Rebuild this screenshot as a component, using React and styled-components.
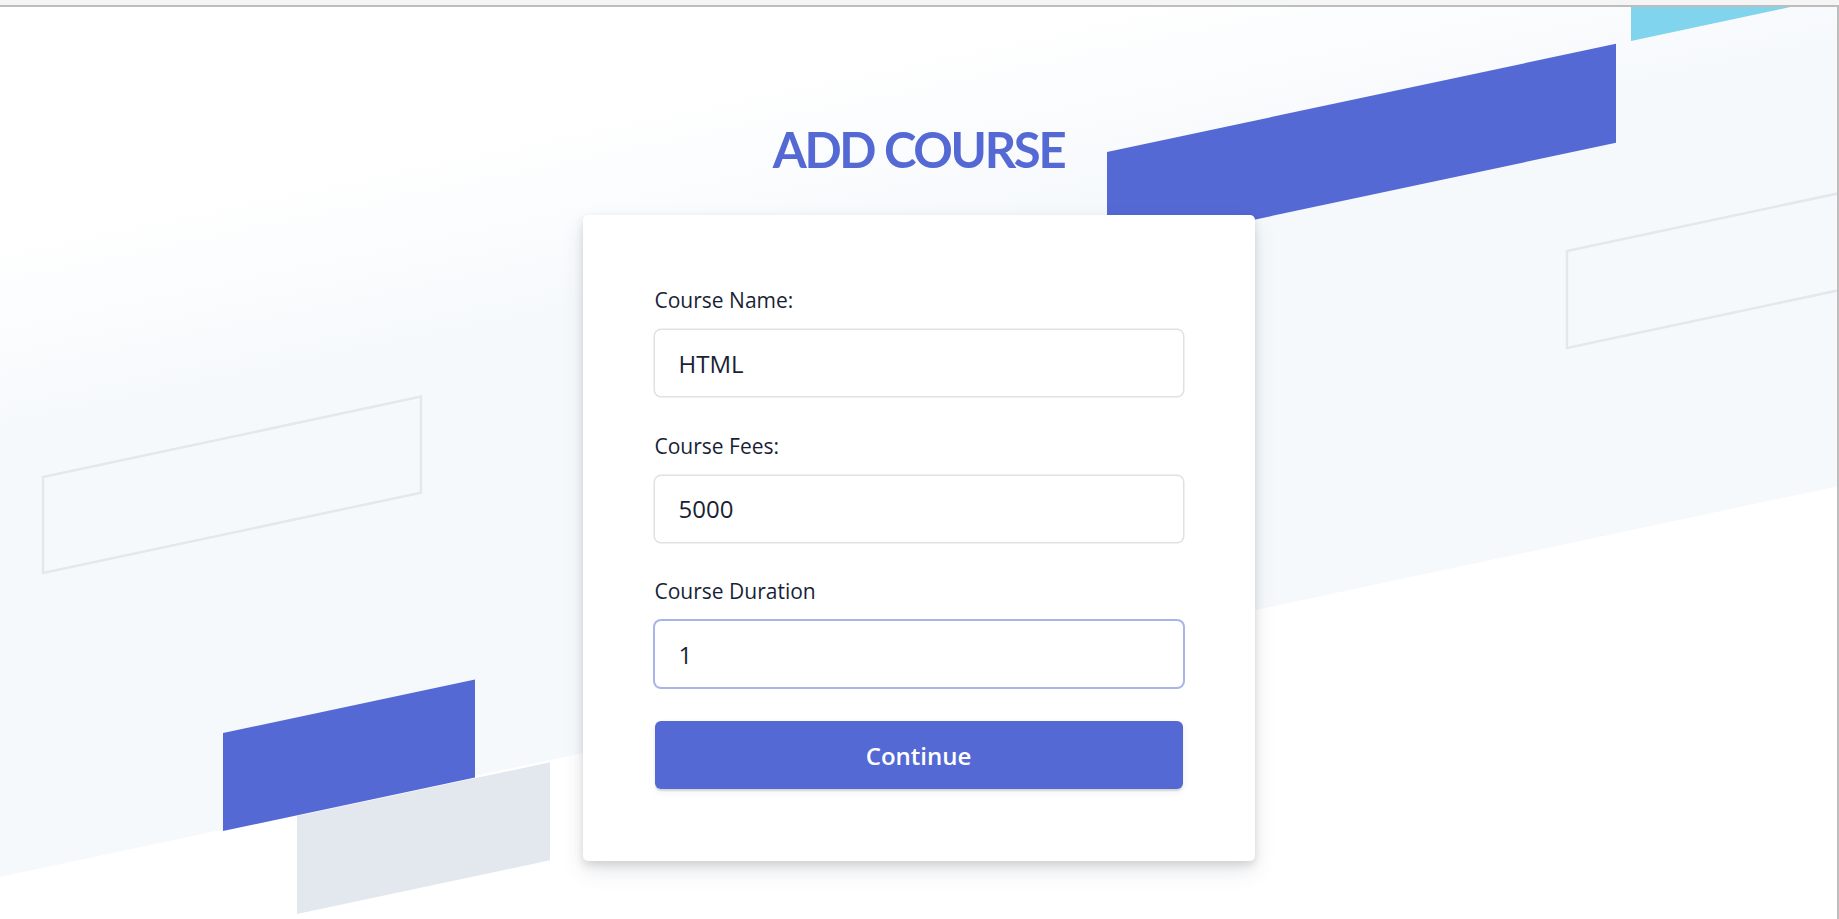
import React from 'react';
import styled, { createGlobalStyle, css } from 'styled-components';

const GlobalStyle = createGlobalStyle`
  * { box-sizing: border-box; }
  html, body { margin: 0; padding: 0; background: #f5f5f5; }
  body {
    font-family: 'Open Sans', 'Noto Sans', sans-serif;
    color: #1a1f36;
  }
`;

const Window = styled('div')`
  display: flex;
  flex-direction: column;
  height: 100vh;
  border-top: 5px solid #f5f5f5;
`;

const Page = styled('main')`
  position: relative;
  flex: 1;
  display: flex;
  flex-direction: column;
  align-items: center;
  overflow: hidden;
  background: #fff;
  border-top: 2px solid #bdbdbd;
  border-right: 2px solid #bdbdbd;
`;

const Backdrop = styled('svg')`
  position: absolute;
  inset: 0;
  width: 100%;
  height: 100%;
  z-index: 0;
`;

const Title = styled('h1')`
  position: relative;
  z-index: 1;
  margin: 112px 0 36px;
  font-family: Lato, 'Open Sans', sans-serif;
  font-size: 49px;
  line-height: 60px;
  font-weight: 700;
  letter-spacing: -2.3px;
  color: #5469d4;
`;

const Card = styled('section')`
  position: relative;
  z-index: 1;
  width: 672px;
  padding: 71px 72px 72px;
  background: #fff;
  border-radius: 5px;
  box-shadow: rgba(60, 66, 87, 0.12) 0 10px 21px 0, rgba(0, 0, 0, 0.12) 0 4px 9px 0;
`;

const Form = styled('form')`
  display: flex;
  flex-direction: column;
`;

const Field = styled('div')`
  display: flex;
  flex-direction: column;
  padding-bottom: 35.5px;

  &:last-of-type {
    padding-bottom: 34px;
  }
`;

const Label = styled('label')`
  font-size: 21px;
  line-height: 29px;
  margin-bottom: 15px;
  color: #1a1f36;
`;

const focusRing = css`
  box-shadow: 0 0 0 2px rgba(84, 105, 212, 0.5);
`;

const Input = styled('input')`
  height: 66px;
  padding: 0 24px;
  border: none;
  border-radius: 6px;
  background: #fff;
  font-family: inherit;
  font-size: 24px;
  color: #1a1f36;
  caret-color: #1a1f36;
  box-shadow: 0 0 0 1.5px rgba(60, 66, 87, 0.16);
  outline: none;
  ${(p) => p.$focused && focusRing}
  &:focus { ${focusRing} }
`;

const SubmitButton = styled('button')`
  height: 68px;
  border: none;
  border-radius: 6px;
  background: #5469d4;
  color: #fff;
  font-family: inherit;
  font-size: 24px;
  font-weight: 600;
  cursor: pointer;
  box-shadow: rgba(0, 0, 0, 0.12) 0 1.5px 1.5px 0, rgba(60, 66, 87, 0.08) 0 3px 7.5px 0;
`;

// slope of the skewed shapes: tan(12deg)
const K = 0.2126;
const slant = (x0, y0, w, h) => {
  const y1 = y0 - K * w;
  return `${x0},${y0} ${x0 + w},${y1} ${x0 + w},${y1 + h} ${x0},${y0 + h}`;
};

const Background = () => (
  <Backdrop viewBox="0 7 1837 912" preserveAspectRatio="xMinYMin slice">
    <defs>
      <linearGradient id="fade" gradientUnits="userSpaceOnUse" x1="48" y1="225" x2="87" y2="411">
        <stop offset="0" stopColor="#ffffff" />
        <stop offset="1" stopColor="#f6f9fc" />
      </linearGradient>
    </defs>
    <polygon points="0,0 1900,0 1900,473 0,877" fill="url(#fade)" />
    <polygon points="1631,41 1931,-23 1931,-200 1631,-200" fill="#80d4ee" />
    <polygon points={slant(1107, 152, 509, 99)} fill="#5469d4" />
    <polygon points={slant(1567, 251, 400, 97)} fill="none" stroke="#e3e8ee" strokeWidth="2.5" />
    <polygon points={slant(43, 477, 378, 96)} fill="none" stroke="#e3e8ee" strokeWidth="2.5" />
    <polygon points={slant(297, 816, 253, 98)} fill="#e3e8ee" />
    <polygon points={slant(223, 733, 252, 98)} fill="#5469d4" />
  </Backdrop>
);

const fields = [
  { id: 'name', label: 'Course Name:', value: 'HTML' },
  { id: 'fees', label: 'Course Fees:', value: '5000' },
  { id: 'duration', label: 'Course Duration', value: '1', focused: true },
];

export default function App() {
  return (
    <Window>
      <GlobalStyle />
      <Page>
        <Background />
        <Title>ADD COURSE</Title>
        <Card>
          <Form onSubmit={(e) => e.preventDefault()}>
            {fields.map((f) => (
              <Field key={f.id}>
                <Label htmlFor={f.id}>{f.label}</Label>
                <Input id={f.id} defaultValue={f.value} $focused={f.focused} autoFocus={f.focused} />
              </Field>
            ))}
            <SubmitButton type="submit">Continue</SubmitButton>
          </Form>
        </Card>
      </Page>
    </Window>
  );
}
